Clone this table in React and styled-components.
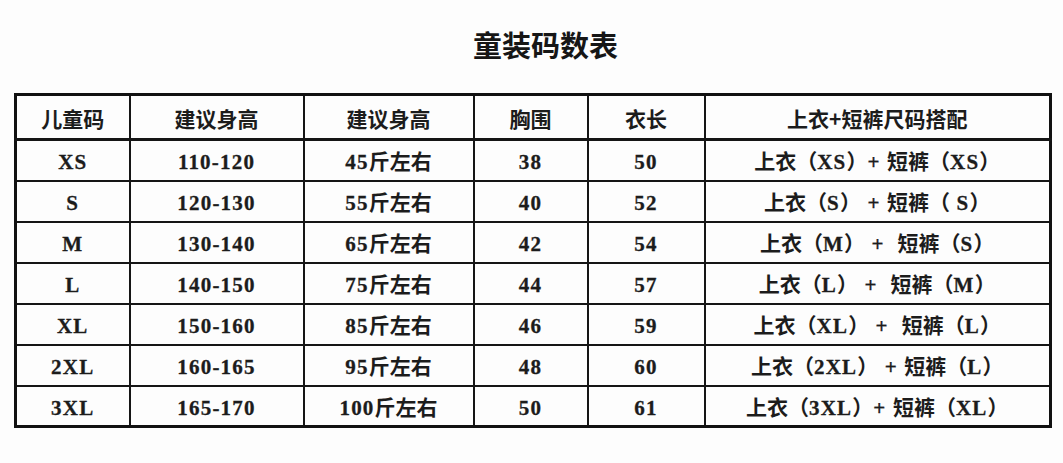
import React from "react";
import styled, { createGlobalStyle } from "styled-components";

const Global = createGlobalStyle`
  html, body { margin: 0; padding: 0; background: #ffffff; }
  body { font-family: "Noto Sans CJK SC", sans-serif; color: #1a1a1a; }
`;

const Page = styled.div`
  width: 1063px;
  height: 463px;
  padding: 26px 0 0 14px;
  box-sizing: border-box;
  background: #fdfdfd;
`;

const Title = styled.h1`
  margin: 0 0 31px 0;
  padding-left: 28px;
  height: 36px;
  line-height: 36px;
  text-align: center;
  width: 1035px;
  font-family: "Noto Sans CJK SC", sans-serif;
  font-weight: 700;
  font-size: 29px;
  color: #161616;
  box-sizing: border-box;
`;

const Table = styled.table`
  border-collapse: collapse;
  table-layout: fixed;
  width: 1035px;
  border: 3px solid #111;
`;

const Row = styled.tr`
  height: ${(p) => (p.$head ? 45 : 41)}px;
`;

const Cell = styled.td`
  border: 2px solid #151515;
  border-bottom-width: ${(p) => (p.$head ? 3 : 2)}px;
  padding: 2px 0 0 0;
  text-align: center;
  vertical-align: middle;
  font-family: "Noto Sans CJK SC", sans-serif;
  font-weight: 700;
  font-size: 21px;
  line-height: 24px;
  white-space: pre;
  color: #1c1c1c;
`;

const Latin = styled.span`
  font-family: "Liberation Serif", serif;
  font-weight: 700;
  font-size: 21px;
  letter-spacing: 1.2px;
  -webkit-text-stroke: 0.3px #1c1c1c;
`;

const cols = [114, 174, 170, 114, 117, 346];

const header = ["儿童码", "建议身高", "建议身高", "胸围", "衣长", "上衣+短裤尺码搭配"];

const rows = [
  ["XS", "110-120", "45斤左右", "38", "50", "上衣（XS）+ 短裤（XS）"],
  ["S", "120-130", "55斤左右", "40", "52", "上衣（S） + 短裤（ S）"],
  ["M", "130-140", "65斤左右", "42", "54", "上衣（M） +  短裤（S）"],
  ["L", "140-150", "75斤左右", "44", "57", "上衣（L） +  短裤（M）"],
  ["XL", "150-160", "85斤左右", "46", "59", "上衣（XL） +  短裤（L）"],
  ["2XL", "160-165", "95斤左右", "48", "60", "上衣（2XL） + 短裤（L）"],
  ["3XL", "165-170", "100斤左右", "50", "61", "上衣（3XL）+ 短裤（XL）"],
];

function Mixed({ text }) {
  const parts = text.split(/([A-Za-z0-9 +\-]+)/).filter(Boolean);
  return parts.map((p, i) =>
    /^[A-Za-z0-9 +\-]+$/.test(p) ? <Latin key={i}>{p}</Latin> : <React.Fragment key={i}>{p}</React.Fragment>
  );
}

export default function App() {
  return (
    <>
      <Global />
      <Page>
        <Title>童装码数表</Title>
        <Table>
          <colgroup>
            {cols.map((w, i) => (
              <col key={i} style={{ width: w }} />
            ))}
          </colgroup>
          <tbody>
            <Row $head>
              {header.map((h, i) => (
                <Cell key={i} $head>
                  {h}
                </Cell>
              ))}
            </Row>
            {rows.map((r, i) => (
              <Row key={i}>
                {r.map((c, j) => (
                  <Cell key={j}>
                    <Mixed text={c} />
                  </Cell>
                ))}
              </Row>
            ))}
          </tbody>
        </Table>
      </Page>
    </>
  );
}
